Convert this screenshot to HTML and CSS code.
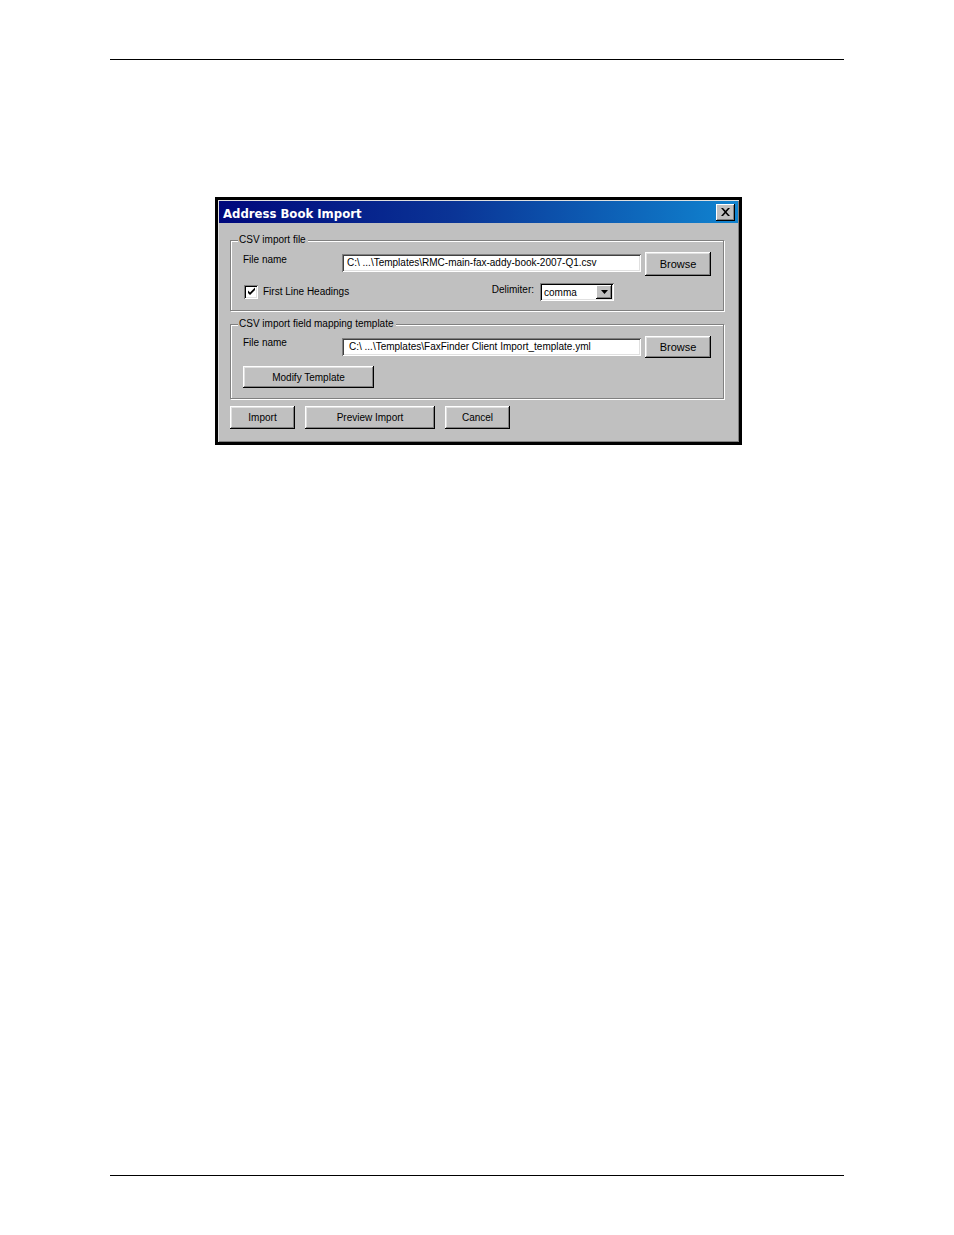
FILE: index.html
```html
<!DOCTYPE html>
<html>
<head>
<meta charset="utf-8">
<title>Address Book Import</title>
<link rel="stylesheet" href="styles.css">
</head>
<body>
<div class="page">
  <div class="rule rule-top"></div>

  <div class="dialog">
    <div class="titlebar">
      <span class="title">Address Book Import</span>
      <span class="close">
        <svg width="9" height="8" viewBox="0 0 9 8"><path d="M0 0h2l2.5 2.8L7 0h2L5.5 4 9 8H7L4.5 5.2 2 8H0l3.5-4z" fill="#000"/></svg>
      </span>
    </div>

    <div class="body">
      <fieldset class="group group-one">
        <legend>CSV import file</legend>
        <div class="row file-row">
          <span class="label">File name</span>
          <span class="input">C:\ ...\Templates\RMC-main-fax-addy-book-2007-Q1.csv</span>
          <span class="btn btn-browse">Browse</span>
        </div>
        <div class="row opt-row">
          <span class="check">
            <svg width="9" height="9" viewBox="0 0 9 9"><path d="M1 3.5l2 2 5-5v2.5l-5 5-2-2z" fill="#000"/></svg>
          </span>
          <span class="check-label">First Line Headings</span>
          <span class="delim">
            <span class="delim-label">Delimiter:</span>
            <span class="select">
              <span class="select-text">comma</span>
              <span class="select-btn">
                <svg width="7" height="4" viewBox="0 0 7 4"><path d="M0 0h7L3.5 4z" fill="#000"/></svg>
              </span>
            </span>
          </span>
        </div>
      </fieldset>

      <fieldset class="group group-two">
        <legend>CSV import field mapping template</legend>
        <div class="row file-row file-row-two">
          <span class="label">File name</span>
          <span class="input input-two">C:\ ...\Templates\FaxFinder Client Import_template.yml</span>
          <span class="btn btn-browse btn-browse-two">Browse</span>
        </div>
        <div class="row modify-row">
          <span class="btn btn-modify">Modify Template</span>
        </div>
      </fieldset>

      <div class="actions">
        <span class="btn btn-small">Import</span>
        <span class="btn btn-wide">Preview Import</span>
        <span class="btn btn-small">Cancel</span>
      </div>
    </div>
  </div>

  <div class="rule rule-bottom"></div>
</div>
</body>
</html>
```

FILE: styles.css
```css
html, body {
  margin: 0;
  padding: 0;
  background: #fff;
}

.page {
  padding: 0 110px;
  font-family: "Liberation Sans", Arial, sans-serif;
}

.rule {
  height: 1px;
  background: #000;
}

.rule-top {
  margin-top: 59px;
}

.rule-bottom {
  margin-top: 730px;
}

.dialog {
  box-sizing: border-box;
  width: 527px;
  height: 248px;
  margin: 137px 0 0 105px;
  border: 3px solid #000;
  padding: 1px;
  background: #c0c0c0;
  box-shadow: inset 1px 1px 0 #e0e0e0, inset -1px -1px 0 #808080;
}

.titlebar {
  box-sizing: border-box;
  height: 22px;
  display: flex;
  align-items: center;
  justify-content: space-between;
  padding: 0 3px 0 4px;
  background: linear-gradient(to right, #00087c 0%, #0a3496 45%, #1084d0 100%);
}

.title {
  color: #fff;
  font-family: "DejaVu Sans", Verdana, sans-serif;
  font-weight: bold;
  font-size: 11.7px;
  padding-top: 3px;
}

.close {
  box-sizing: border-box;
  width: 19px;
  height: 17px;
  display: flex;
  align-items: center;
  justify-content: center;
  background: #c0c0c0;
  box-shadow: inset -1px -1px 0 #000, inset 1px 1px 0 #fff, inset -2px -2px 0 #808080;
}

.body {
  padding: 11px 11px 0 11px;
}

.group {
  margin: 0;
  padding: 6px 13px 0 12px;
  border: 1px solid #808080;
  box-shadow: inset 1px 1px 0 #fff, 1px 1px 0 #fff;
  width: 494px;
  box-sizing: border-box;
  min-width: 0;
}

.group legend {
  font-size: 10px;
  line-height: 12px;
  color: #000;
  padding: 0 2px 0 1px;
  margin-left: -5px;
  background: #c0c0c0;
}

.group-one {
  height: 77px;
}

.group-two {
  margin-top: 7px;
  height: 81px;
}

.row {
  display: flex;
  align-items: center;
  font-size: 10px;
  color: #000;
}

.file-row {
  height: 24px;
}

.file-row-two {
  height: 22px;
}

.label {
  width: 99px;
  flex: none;
  margin-top: -10px;
}

.input {
  box-sizing: border-box;
  width: 299px;
  height: 18px;
  flex: none;
  margin-right: 4px;
  padding: 0 0 0 5px;
  line-height: 17px;
  background: #fff;
  white-space: nowrap;
  overflow: hidden;
  box-shadow: inset 1px 1px 0 #808080, inset -1px -1px 0 #fff, inset 2px 2px 0 #404040, inset -2px -2px 0 #e0e0e0;
  margin-top: -2px;
}

.input-two {
  padding-left: 7px;
  margin-top: 0;
}

.btn {
  box-sizing: border-box;
  display: flex;
  align-items: center;
  justify-content: center;
  background: #c0c0c0;
  font-size: 10px;
  color: #000;
  white-space: nowrap;
  box-shadow: inset -1px -1px 0 #000, inset 1px 1px 0 #fff, inset -2px -2px 0 #808080, inset 2px 2px 0 #e0e0e0;
}

.btn-browse {
  width: 66px;
  height: 24px;
  font-size: 11px;
  flex: none;
}

.btn-browse-two {
  height: 22px;
}

.opt-row {
  height: 19px;
  margin-top: 6px;
}

.check {
  box-sizing: border-box;
  width: 14px;
  height: 14px;
  margin-left: 1px;
  display: flex;
  align-items: center;
  justify-content: center;
  background: #fff;
  box-shadow: inset 1px 1px 0 #808080, inset -1px -1px 0 #fff, inset 2px 2px 0 #000, inset -2px -2px 0 #e0e0e0;
}

.check-label {
  margin-left: 5px;
}

.delim {
  display: flex;
  align-items: center;
  margin-left: auto;
  margin-right: 96px;
}

.delim-label {
  margin-right: 6px;
  margin-top: -5px;
}

.select {
  box-sizing: border-box;
  width: 74px;
  height: 18px;
  display: flex;
  align-items: center;
  justify-content: space-between;
  padding: 2px 2px 2px 4px;
  background: #fff;
  box-shadow: inset 1px 1px 0 #808080, inset -1px -1px 0 #fff, inset 2px 2px 0 #000, inset -2px -2px 0 #e0e0e0;
}

.select-text {
  padding-top: 1px;
}

.select-btn {
  box-sizing: border-box;
  width: 16px;
  height: 14px;
  display: flex;
  align-items: center;
  justify-content: center;
  background: #c0c0c0;
  box-shadow: inset -1px -1px 0 #000, inset 1px 1px 0 #fff, inset -2px -2px 0 #808080;
}

.modify-row {
  margin-top: 8px;
}

.btn-modify {
  width: 131px;
  height: 22px;
}

.actions {
  display: flex;
  gap: 10px;
  margin-top: 7px;
}

.btn-small {
  width: 65px;
  height: 23px;
}

.btn-wide {
  width: 130px;
  height: 23px;
}
```
